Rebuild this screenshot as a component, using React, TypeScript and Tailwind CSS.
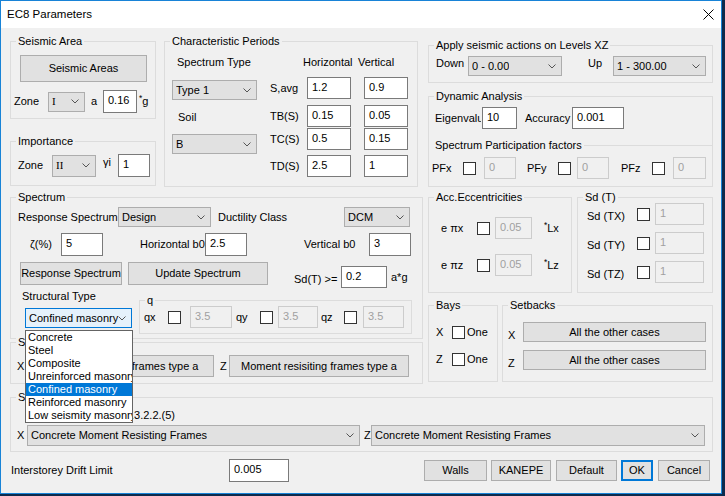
import React from 'react';

function Chevron() {
  return (
    <svg width="8" height="5" viewBox="0 0 8 5" className="shrink-0">
      <path d="M0.5 0.5 L4 4 L7.5 0.5" fill="none" stroke="#555" strokeWidth="1" />
    </svg>
  );
}

function Group({ label, className = '', children }: { label: string; className?: string; children?: React.ReactNode }) {
  return (
    <div className={`relative border border-[#dcdcdc] shrink-0 ${className}`}>
      <span className="absolute -top-[8px] left-[5px] bg-[#f0f0f0] px-[2px] leading-[14px] whitespace-nowrap">{label}</span>
      {children}
    </div>
  );
}

function Input({ value, className = '', disabled = false }: { value: string; className?: string; disabled?: boolean }) {
  return (
    <div
      className={`flex items-center pl-[4px] pb-[2px] border shrink-0 whitespace-nowrap ${
        disabled ? 'border-[#cccccc] bg-[#f0f0f0] text-[#a0a0a0]' : 'border-[#7a7a7a] bg-white'
      } ${className}`}
    >
      {value}
    </div>
  );
}

function Combo({ value, className = '', focused = false }: { value: string; className?: string; focused?: boolean }) {
  return (
    <div
      className={`flex items-center justify-between pl-[3px] pr-[5px] border shrink-0 ${
        focused ? 'border-[#0078d7] bg-[#e5f1fb]' : 'border-[#adadad] bg-[#e1e1e1]'
      } ${className}`}
    >
      <span className="whitespace-nowrap overflow-hidden">{value}</span>
      <Chevron />
    </div>
  );
}

function Btn({ label, className = '' }: { label: string; className?: string }) {
  return (
    <div className={`flex items-center justify-center border border-[#adadad] bg-[#e1e1e1] whitespace-nowrap overflow-hidden shrink-0 ${className}`}>
      {label}
    </div>
  );
}

function Check() {
  return <div className="w-[13px] h-[13px] border border-[#333333] bg-white shrink-0" />;
}

const STRUCT_TYPES = [
  'Concrete',
  'Steel',
  'Composite',
  'Unreinforced masonry',
  'Confined masonry',
  'Reinforced masonry',
  'Low seismity masonry',
];

export default function App() {
  return (
    <div className="w-[725px] h-[496px] bg-[#0d2a4c] text-[11px] text-black font-['Liberation_Sans',Arial,sans-serif] overflow-hidden">
      <div className="relative w-[722px] h-[494px] border border-[#1883d7] bg-[#f0f0f0] flex flex-col">
        {/* Title bar */}
        <div className="h-[27px] bg-white flex items-center justify-between pl-[6px] pr-[7px] shrink-0">
          <span className="text-[11.5px]">EC8 Parameters</span>
          <svg width="11" height="11" viewBox="0 0 11 11">
            <path d="M0.5 0.5 L10.5 10.5 M10.5 0.5 L0.5 10.5" stroke="#000" strokeWidth="1" />
          </svg>
        </div>

        <div className="flex-1 pl-[9px] flex flex-col">
          {/* Top row */}
          <div className="flex items-start mt-[13px]">
            <div className="w-[146px] flex flex-col shrink-0">
              <Group label="Seismic Area" className="h-[78px] flex flex-col">
                <Btn label="Seismic Areas" className="mt-[13px] ml-[9px] w-[127px] h-[27px]" />
                <div className="mt-[8px] h-[23px] flex items-center pl-[3px]">
                  <span className="w-[34px]">Zone</span>
                  <Combo value="I" className="w-[37px] h-[20px] font-['Liberation_Serif',serif]" />
                  <span className="w-[18px] pl-[6px]">a</span>
                  <Input value="0.16" className="w-[34px] h-[23px]" />
                  <span className="ml-[2px]"><sup>*</sup>g</span>
                </div>
              </Group>
              <Group label="Importance" className="mt-[22px] h-[45px]">
                <div className="mt-[12px] h-[23px] flex items-center pl-[7px]">
                  <span className="w-[34px]">Zone</span>
                  <Combo value="II" className="w-[44px] h-[22px] font-['Liberation_Serif',serif]" />
                  <span className="w-[22px] pl-[7px] self-start">γi</span>
                  <Input value="1" className="w-[32px] h-[23px]" />
                </div>
              </Group>
            </div>

            <Group label="Characteristic Periods" className="ml-[8px] w-[254px] h-[146px] flex items-start">
              <div className="ml-[7px] w-[85px] flex flex-col">
                <span className="mt-[13px] pl-[5px] leading-[14px]">Spectrum Type</span>
                <Combo value="Type 1" className="mt-[11px] w-[85px] h-[20px]" />
                <span className="mt-[10px] pl-[6px] leading-[14px]">Soil</span>
                <Combo value="B" className="mt-[10px] w-[85px] h-[20px]" />
              </div>
              <div className="ml-[13px] flex flex-col">
                <div className="mt-[13px] leading-[14px] flex">
                  <span className="w-[33px]" />
                  <span className="w-[55px]">Horizontal</span>
                  <span>Vertical</span>
                </div>
                {[
                  ['S,avg', '1.2', '0.9', 'mt-[8px]'],
                  ['TB(S)', '0.15', '0.05', 'mt-[6px]'],
                  ['TC(S)', '0.5', '0.15', 'mt-[1px]'],
                  ['TD(S)', '2.5', '1', 'mt-[5px]'],
                ].map(([l, h, v, m]) => (
                  <div key={l} className={`${m} h-[22px] flex items-center`}>
                    <span className="w-[37px]">{l}</span>
                    <Input value={h} className="w-[44px] h-[22px]" />
                    <Input value={v} className="ml-[13px] w-[44px] h-[22px]" />
                  </div>
                ))}
              </div>
            </Group>

            <div className="ml-[10px] w-[285px] flex flex-col shrink-0">
              <Group label="Apply seismic actions on Levels XZ" className="mt-[4px] h-[38px]">
                <div className="mt-[10px] pl-[7px] flex items-start">
                  <span className="w-[32px] leading-[14px]">Down</span>
                  <Combo value="0 - 0.00" className="w-[94px] h-[20px]" />
                  <span className="w-[51px] pl-[26px] leading-[14px]">Up</span>
                  <Combo value="1 - 300.00" className="w-[93px] h-[20px]" />
                </div>
              </Group>
              <Group label="Dynamic Analysis" className="mt-[13px] h-[91px] flex flex-col">
                <div className="mt-[10px] h-[22px] pl-[6px] flex items-center">
                  <span className="w-[46px] mr-[1px] overflow-hidden whitespace-nowrap">Eigenvalues</span>
                  <Input value="10" className="w-[35px] h-[22px]" />
                  <span className="w-[55px] pl-[8px]">Accuracy</span>
                  <Input value="0.001" className="w-[52px] h-[22px]" />
                </div>
                <div className="mt-[9px] h-[14px] pl-[6px] flex items-center">
                  <span className="whitespace-nowrap leading-[14px]">Spectrum Participation factors</span>
                  <div className="flex-1 ml-[2px] border-t border-[#dcdcdc]" />
                </div>
                <div className="mt-[5px] h-[22px] pl-[3px] flex items-center">
                  <span className="w-[31px]">PFx</span>
                  <Check />
                  <Input value="0" disabled className="ml-[8px] w-[32px] h-[22px]" />
                  <span className="w-[42px] pl-[11px]">PFy</span>
                  <Check />
                  <Input value="0" disabled className="ml-[6px] w-[32px] h-[22px]" />
                  <span className="w-[43px] pl-[12px]">PFz</span>
                  <Check />
                  <Input value="0" disabled className="ml-[8px] w-[33px] h-[22px]" />
                </div>
              </Group>
            </div>
          </div>

          {/* Second row */}
          <div className="flex items-start mt-[10px]">
            <div className="w-[413px] flex flex-col shrink-0">
              <Group label="Spectrum" className="h-[142px] flex flex-col">
                <div className="mt-[9px] h-[20px] pl-[7px] flex items-center">
                  <span className="w-[100px] whitespace-nowrap">Response Spectrum</span>
                  <Combo value="Design" className="w-[93px] h-[20px]" />
                  <span className="w-[133px] pl-[7px]">Ductility Class</span>
                  <Combo value="DCM" className="w-[66px] h-[20px]" />
                </div>
                <div className="mt-[6px] h-[23px] pl-[19px] flex items-center">
                  <span className="w-[31px]">ζ(%)</span>
                  <Input value="5" className="w-[42px] h-[23px]" />
                  <span className="w-[102px] pl-[37px] whitespace-nowrap">Horizontal b0</span>
                  <Input value="2.5" className="w-[42px] h-[23px]" />
                  <span className="w-[122px] pl-[57px] whitespace-nowrap">Vertical b0</span>
                  <Input value="3" className="w-[42px] h-[23px]" />
                </div>
                <div className="mt-[6px] h-[26px] pl-[9px] flex items-start">
                  <Btn label="Response Spectrum" className="w-[102px] h-[23px]" />
                  <Btn label="Update Spectrum" className="ml-[6px] w-[140px] h-[23px]" />
                  <span className="w-[73px] pl-[26px] mt-[10px] leading-[14px] whitespace-nowrap">Sd(T) &gt;=</span>
                  <Input value="0.2" className="mt-[4px] w-[46px] h-[22px]" />
                  <span className="ml-[4px] mt-[8px] leading-[14px]">a*g</span>
                </div>
                <div className="mt-[1px] flex items-start">
                  <div className="w-[128px] flex flex-col">
                    <span className="ml-[11px] leading-[14px]">Structural Type</span>
                    <Combo value="Confined masonry" focused className="mt-[5px] ml-[14px] w-[107px] h-[20px]" />
                  </div>
                  <Group label="q" className="mt-[11px] w-[273px] h-[34px]">
                    <div className="mt-[5px] h-[22px] pl-[4px] flex items-center">
                      <span className="w-[24px]">qx</span>
                      <Check />
                      <Input value="3.5" disabled className="ml-[9px] w-[42px] h-[22px]" />
                      <span className="w-[28px] pl-[4px]">qy</span>
                      <Check />
                      <Input value="3.5" disabled className="ml-[5px] w-[40px] h-[22px]" />
                      <span className="w-[26px] pl-[3px]">qz</span>
                      <Check />
                      <Input value="3.5" disabled className="ml-[6px] w-[41px] h-[22px]" />
                    </div>
                  </Group>
                </div>
              </Group>

              <Group label="Structural System" className="mt-[3px] h-[42px]">
                <div className="mt-[12px] h-[22px] pl-[6px] flex items-center">
                  <span className="w-[10px]">X</span>
                  <Btn label="Moment resisiting frames type a" className="w-[187px] h-[22px]" />
                  <span className="w-[15px] pl-[6px]">Z</span>
                  <Btn label="Moment resisiting frames type a" className="w-[180px] h-[22px]" />
                </div>
              </Group>
            </div>

            <div className="ml-[5px] w-[285px] flex flex-col shrink-0">
              <div className="flex">
                <Group label="Acc.Eccentricities" className="w-[144px] h-[96px] flex flex-col">
                  <div className="mt-[19px] h-[22px] pl-[12px] flex items-center">
                    <span className="w-[36px]">e πx</span>
                    <Check />
                    <Input value="0.05" disabled className="ml-[5px] w-[37px] h-[22px]" />
                    <span className="ml-[12px]"><sup>*</sup>Lx</span>
                  </div>
                  <div className="mt-[15px] h-[22px] pl-[12px] flex items-center">
                    <span className="w-[36px]">e πz</span>
                    <Check />
                    <Input value="0.05" disabled className="ml-[5px] w-[37px] h-[22px]" />
                    <span className="ml-[12px]"><sup>*</sup>Lz</span>
                  </div>
                </Group>
                <Group label="Sd (T)" className="ml-[5px] w-[136px] h-[96px] flex flex-col">
                  {['Sd (TX)', 'Sd (TY)', 'Sd (TZ)'].map((l, i) => (
                    <div key={l} className={`${i === 0 ? 'mt-[5px]' : 'mt-[7px]'} h-[22px] pl-[9px] flex items-center`}>
                      <span className="w-[50px] pt-[4px]">{l}</span>
                      <Check />
                      <Input value="1" disabled className="ml-[5px] w-[49px] h-[22px]" />
                    </div>
                  ))}
                </Group>
              </div>
              <div className="flex mt-[12px]">
                <Group label="Bays" className="w-[70px] h-[77px] flex flex-col">
                  <div className="mt-[20px] h-[13px] pl-[7px] flex items-center">
                    <span className="w-[16px]">X</span>
                    <Check />
                    <span className="ml-[2px]">One</span>
                  </div>
                  <div className="mt-[14px] h-[13px] pl-[7px] flex items-center">
                    <span className="w-[16px]">Z</span>
                    <Check />
                    <span className="ml-[2px]">One</span>
                  </div>
                </Group>
                <Group label="Setbacks" className="ml-[4px] w-[211px] h-[77px] flex flex-col">
                  <div className="mt-[16px] h-[20px] pl-[5px] flex items-center">
                    <span className="w-[15px] pt-[6px]">X</span>
                    <Btn label="All the other cases" className="w-[183px] h-[20px]" />
                  </div>
                  <div className="mt-[8px] h-[20px] pl-[5px] flex items-center">
                    <span className="w-[15px] pt-[6px]">Z</span>
                    <Btn label="All the other cases" className="w-[183px] h-[20px]" />
                  </div>
                </Group>
              </div>
            </div>
          </div>

          {/* Structure row */}
          <Group label="Structure for Ct" className="mt-[13px] w-[703px] h-[55px] flex flex-col">
            <div className="mt-[10px] pl-[16px] leading-[14px] flex whitespace-nowrap">
              <span className="w-[104px] overflow-hidden">Ct coefficient EC8 §4</span>
              <span>.3.2.2.(5)</span>
            </div>
            <div className="mt-[3px] h-[21px] pl-[6px] flex items-center">
              <span className="w-[10px]">X</span>
              <Combo value="Concrete Moment Resisting Frames" className="w-[333px] h-[21px]" />
              <span className="w-[11px] pl-[4px]">Z</span>
              <Combo value="Concrete Moment Resisting Frames" className="w-[334px] h-[21px]" />
            </div>
          </Group>

          {/* Bottom row */}
          <div className="mt-[6px] h-[24px] flex items-center">
            <span className="ml-[1px] w-[218px]">Interstorey Drift Limit</span>
            <Input value="0.005" className="w-[60px] h-[23px]" />
            <div className="w-[135px] shrink-0" />
            <Btn label="Walls" className="w-[63px] h-[21px]" />
            <Btn label="KANEPE" className="ml-[4px] w-[60px] h-[21px]" />
            <Btn label="Default" className="ml-[5px] w-[61px] h-[21px]" />
            <div className="ml-[4px] w-[32px] h-[21px] flex items-center justify-center border-2 border-[#0078d7] bg-[#e1e1e1]">OK</div>
            <Btn label="Cancel" className="ml-[5px] w-[52px] h-[21px]" />
          </div>
        </div>

        {/* Open dropdown list */}
        <div className="absolute left-[24px] top-[329px] w-[108px] border border-[#646464] bg-white flex flex-col">
          {STRUCT_TYPES.map((t) => (
            <div
              key={t}
              className={`h-[13px] leading-[13px] pl-[2px] whitespace-nowrap overflow-hidden ${
                t === 'Confined masonry' ? 'bg-[#0078d7] text-white' : ''
              }`}
            >
              {t}
            </div>
          ))}
        </div>
      </div>
    </div>
  );
}
